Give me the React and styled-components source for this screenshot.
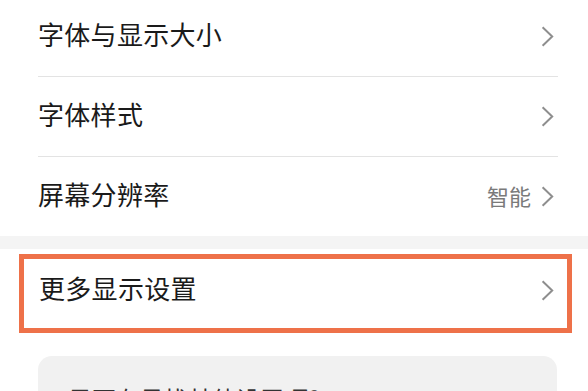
import React from "react";
import styled, { createGlobalStyle } from "styled-components";

const Global = createGlobalStyle`
  html, body { margin: 0; padding: 0; background: #ffffff; }
  body {
    font-family: "Noto Sans CJK SC", "Noto Sans", sans-serif;
    overflow: hidden;
  }
`;

const Page = styled.div`
  width: 588px;
  height: 391px;
  overflow: hidden;
  background: #fff;
`;

const List = styled.div`
  margin-top: -3px;
`;

const Row = styled.div`
  display: flex;
  align-items: center;
  height: 79px;
  margin: 0 30px 0 38px;
  padding-right: 4px;
  border-bottom: ${(p) => (p.$last ? "none" : "1px solid #e3e3e3")};
`;

const Label = styled.span`
  flex: 1;
  font-size: 26px;
  line-height: 1;
  color: #1a1a1a;
  letter-spacing: 0.3px;
  padding-bottom: 5px;
`;

const Value = styled.span`
  font-size: 22px;
  line-height: 1;
  color: #7a7a7a;
  margin-right: 10px;
  padding-bottom: 4px;
`;

const Band = styled.div`
  height: 13px;
  background: #f4f4f4;
`;

const Highlight = styled.div`
  display: flex;
  align-items: center;
  box-sizing: border-box;
  height: 79px;
  margin: 5px 16px 0 19px;
  border: 5px solid #ee7149;
  padding: 0 13px 6px 15px;
`;

const Card = styled.div`
  margin: 23px 31px 0 38px;
  border-radius: 14px;
  background: #f1f1f1;
  padding: 31px 0 0 30px;
  height: 80px;
`;

const CardText = styled.div`
  font-size: 24px;
  line-height: 1;
  color: #333;
`;

const ChevronSvg = styled.svg`
  width: 13px;
  height: 21px;
  flex: none;
`;

const Chevron = () => (
  <ChevronSvg viewBox="0 0 13 21">
    <path
      d="M1.6 1.3 L11.2 10.5 L1.6 19.7"
      fill="none"
      stroke="#8e8e8e"
      strokeWidth="2"
    />
  </ChevronSvg>
);

export default function App() {
  return (
    <Page>
      <Global />
      <List>
        <Row>
          <Label>字体与显示大小</Label>
          <Chevron />
        </Row>
        <Row>
          <Label>字体样式</Label>
          <Chevron />
        </Row>
        <Row $last>
          <Label>屏幕分辨率</Label>
          <Value>智能</Value>
          <Chevron />
        </Row>
      </List>
      <Band />
      <Highlight>
        <Label>更多显示设置</Label>
        <Chevron />
      </Highlight>
      <Card>
        <CardText>是否在寻找其他设置项？</CardText>
      </Card>
    </Page>
  );
}
